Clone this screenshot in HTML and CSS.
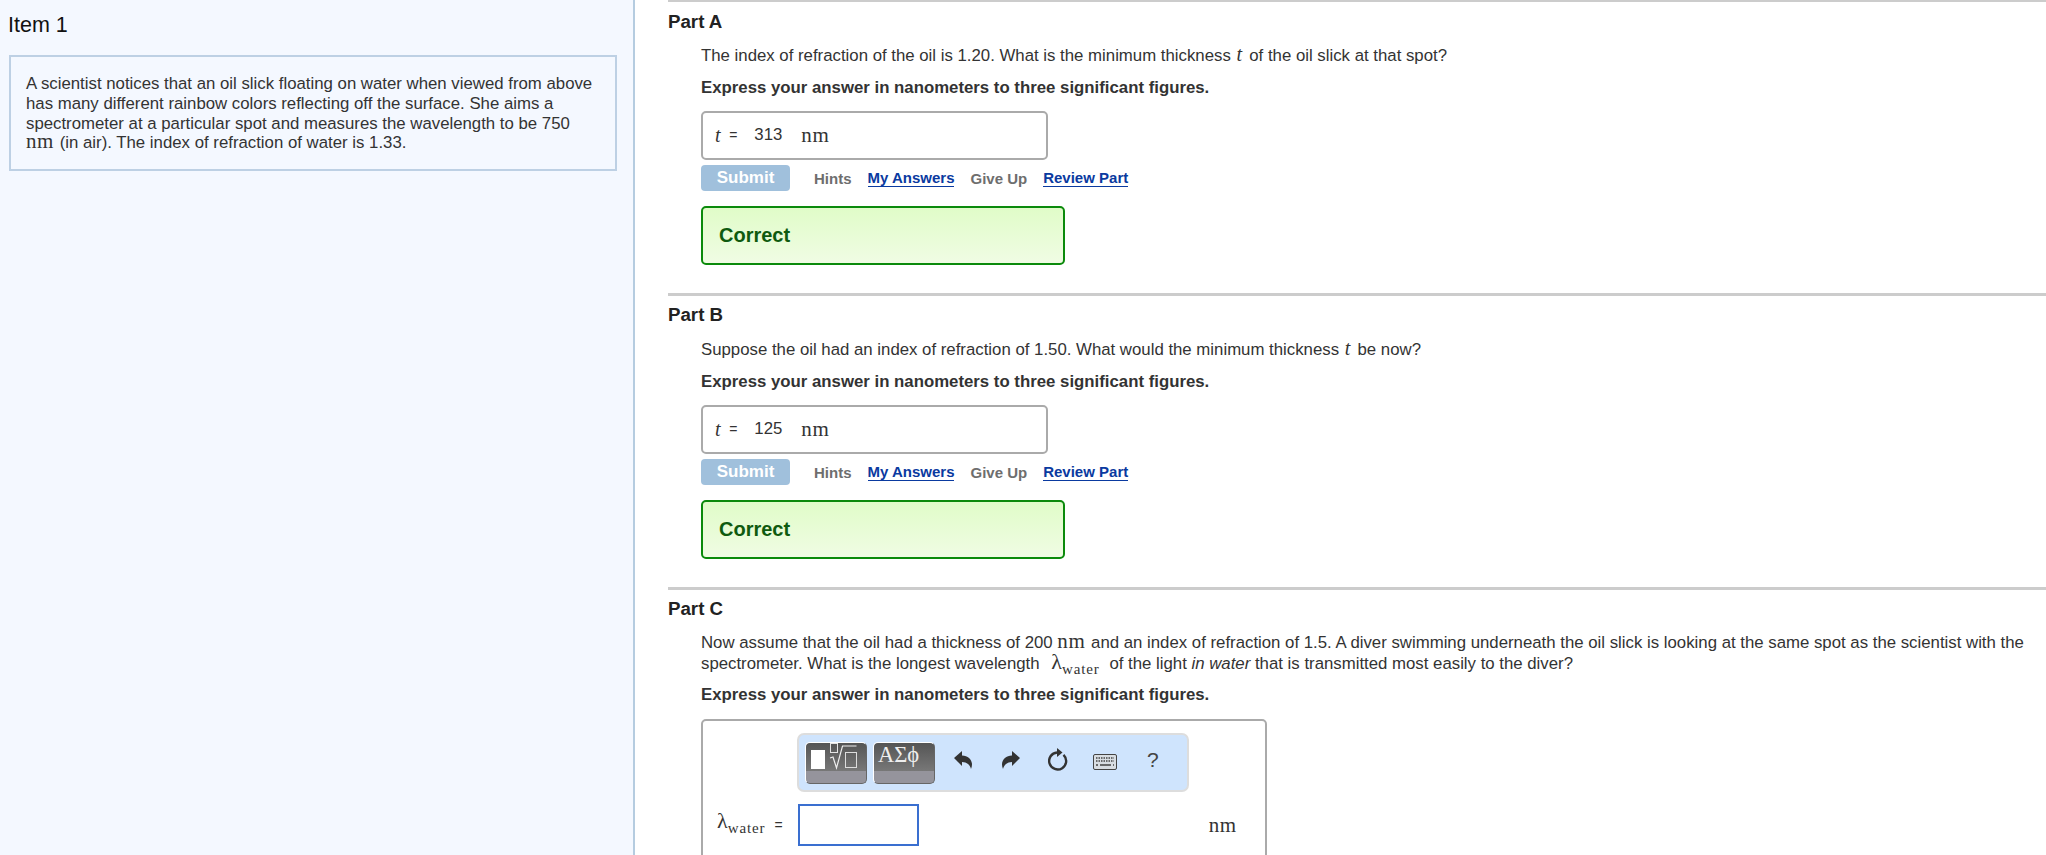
FILE: index.html
```html
<!DOCTYPE html>
<html lang="en">
  <head>
    <meta charset="UTF-8" />
    <meta name="viewport" content="width=device-width, initial-scale=1.0" />
    <title>Item 1</title>
    <link rel="stylesheet" href="styles.css">
  </head>
  <body>
    <div class="item-panel">
      <h1>Item 1</h1>
      <div class="intro">
        A scientist notices that an oil slick floating on water when viewed from above<br />
        has many different rainbow colors reflecting off the surface. She aims a<br />
        spectrometer at a particular spot and measures the wavelength to be 750<br />
        <span class="math nm">nm</span> (in air). The index of refraction of water is 1.33.
      </div>
    </div>

    <div class="parts">
      <section class="part">
        <h2>Part A</h2>
        <div class="part-body">
          <p class="question">The index of refraction of the oil is 1.20. What is the minimum thickness <span class="math var"><i>t</i></span> of the oil slick at that spot?</p>
          <p class="express">Express your answer in nanometers to three significant figures.</p>
          <div class="answer"><span class="math"><i>t</i></span><span class="eq">=</span><span class="value">313</span><span class="math unit">nm</span></div>
          <div class="actions">
            <button class="submit">Submit</button>
            <a class="plain first">Hints</a>
            <a class="link">My Answers</a>
            <a class="plain">Give Up</a>
            <a class="link">Review Part</a>
          </div>
          <div class="correct">Correct</div>
        </div>
      </section>

      <section class="part">
        <h2>Part B</h2>
        <div class="part-body">
          <p class="question">Suppose the oil had an index of refraction of 1.50. What would the minimum thickness <span class="math var"><i>t</i></span> be now?</p>
          <p class="express">Express your answer in nanometers to three significant figures.</p>
          <div class="answer"><span class="math"><i>t</i></span><span class="eq">=</span><span class="value">125</span><span class="math unit">nm</span></div>
          <div class="actions">
            <button class="submit">Submit</button>
            <a class="plain first">Hints</a>
            <a class="link">My Answers</a>
            <a class="plain">Give Up</a>
            <a class="link">Review Part</a>
          </div>
          <div class="correct">Correct</div>
        </div>
      </section>

      <section class="part">
        <h2>Part C</h2>
        <div class="part-body">
          <p class="question long">Now assume that the oil had a thickness of 200 <span class="math nm">nm</span> and an index of refraction of 1.5. A diver swimming underneath the oil slick is looking at the same spot as the scientist with the spectrometer. What is the longest wavelength <span class="math lambda">λ<sub>water</sub></span> of the light <i>in water</i> that is transmitted most easily to the diver?</p>
          <p class="express">Express your answer in nanometers to three significant figures.</p>
          <div class="editor">
            <div class="toolbar">
              <div class="tpl">
                <svg width="61" height="40" viewBox="0 0 61 40">
                  <rect x="5" y="7" width="14" height="19" fill="#fff" />
                  <rect x="24.500" y="0.500" width="7" height="9" fill="none" stroke="#e4e4e4" />
                  <path d="M24 15l3 -1l3.500 11l6 -22h14" fill="none" stroke="#eee" stroke-width="1.200" />
                  <rect x="39.500" y="9.500" width="11" height="15" fill="none" stroke="#ddd" />
                </svg>
              </div>
              <div class="tpl greek">ΑΣϕ</div>
              <svg class="tool undo" width="18" height="18" viewBox="0 0 18 18">
                <path d="M0 7L8 0v4.500c6 0 10 4 10 9c0 1.500-.4 3-1 4.500c-1-4-4-7-9-7v4z" fill="#333" />
              </svg>
              <svg class="tool redo" width="18" height="18" viewBox="0 0 18 18">
                <path d="M18 7L10 0v4.500c-6 0-10 4-10 9c0 1.500.4 3 1 4.500c1-4 4-7 9-7v4z" fill="#333" />
              </svg>
              <svg class="tool reload" width="20" height="23" viewBox="0 0 20 23">
                <path d="M15.500 6.800a8.500 8.500 0 1 1 -6.500 -2.300" fill="none" stroke="#333" stroke-width="2.400" />
                <path d="M9 0v9l5.500 -4.500z" fill="#333" />
              </svg>
              <svg class="tool keys" width="24" height="16" viewBox="0 0 24 16">
                <rect x="0.500" y="0.500" width="23" height="15" rx="1.500" fill="#d8dde2" stroke="#444" />
                <path d="M3 4h18M3 7h18" stroke="#444" stroke-width="1.500" stroke-dasharray="1.500 1" />
                <path d="M3 11h2M7 11h11M20 11h1" stroke="#444" stroke-width="1.600" />
              </svg>
              <span class="tool help">?</span>
            </div>
            <div class="entry-row">
              <span class="math lambda entry-label">λ<sub>water</sub></span>
              <span class="eq">=</span>
              <input type="text" class="entry" />
              <span class="math entry-unit">nm</span>
            </div>
          </div>
        </div>
      </section>
    </div>
  </body>
</html>
```

FILE: styles.css
```css
html,
body {
  height: 100%;
}
body {
  font-family: "Liberation Sans", Arial, sans-serif;
  font-size: 16.800px;
  color: #333;
  background-color: #fff;
  display: flex;
  margin: 0;
  overflow: hidden;
}
.item-panel {
  flex: 0 0 635px;
  box-sizing: border-box;
  height: 855px;
  background-color: #f4f8ff;
  border-right: 2px solid #b5cce0;
  padding: 11px 16px 0 9px;
}
h1 {
  font-size: 21.500px;
  font-weight: normal;
  line-height: 28px;
  margin: 0 0 16px -1px;
  color: #111;
}
.intro {
  border: 2px solid #bdd0e4;
  padding: 17px 17px 16px 15px;
  line-height: 19.800px;
  white-space: nowrap;
}
.math {
  font-family: "Liberation Serif", serif;
  font-size: 20px;
  letter-spacing: 0.6px;
  line-height: 0;
}
.nm {
  font-size: 21px;
  margin-right: 1px;
}
.var {
  margin: 0 2px 0 1px;
}
.parts {
  flex: 1;
  height: 855px;
  overflow: hidden;
  padding-left: 33px;
}
.part {
  box-sizing: border-box;
  border-top: 3px solid #ccc;
  height: 294px;
  padding-top: 9px;
}
.part:first-child {
  margin-top: -1px;
  padding-top: 10px;
}
.part:first-child h2 {
  margin-bottom: 14px;
}
h2 {
  font-size: 18.700px;
  line-height: 20px;
  margin: 0 0 15px;
  color: #222;
}
.part-body {
  margin-left: 33px;
}
.question {
  margin: 0 0 12px;
  line-height: 20px;
}
.question.long {
  line-height: 21px;
  margin: -2px 0 11px;
}
.express {
  margin: 0 0 13px;
  font-weight: bold;
  line-height: 20px;
}
.answer {
  box-sizing: border-box;
  width: 347px;
  height: 49px;
  border: 2px solid #aaa;
  border-radius: 5px;
  display: flex;
  align-items: center;
  padding: 0 0 2px 12px;
}
.eq {
  font-size: 14px;
  margin-left: 8px;
}
.value {
  margin-left: 17px;
}
.unit {
  margin-left: 19px;
  font-size: 21px;
}
.actions {
  display: flex;
  align-items: center;
  margin-top: 5px;
  font-size: 15px;
  font-weight: bold;
}
.submit {
  width: 89px;
  height: 26px;
  padding: 0;
  border: none;
  border-radius: 4px;
  background-color: #a0c0dc;
  color: #fff;
  font-family: inherit;
  font-size: 17px;
  font-weight: bold;
}
.plain {
  color: #6e6e6e;
  margin-left: 16px;
}
.plain.first {
  margin-left: 24px;
}
.link {
  color: #0a3aa0;
  border-bottom: 1px solid #0a3aa0;
  line-height: 16px;
  margin-left: 16px;
}
.correct {
  box-sizing: border-box;
  width: 364px;
  height: 59px;
  margin-top: 15px;
  padding-left: 16px;
  display: flex;
  align-items: center;
  border: 2px solid #0b8a0b;
  border-radius: 5px;
  background: linear-gradient(#e0fcc8, #f0fce4);
  color: #0f5a0f;
  font-size: 20px;
  font-weight: bold;
}
.editor {
  box-sizing: border-box;
  width: 566px;
  height: 200px;
  margin-top: 14px;
  border: 2px solid #aaa;
  border-radius: 5px;
  padding: 12px 14px;
}
.toolbar {
  box-sizing: border-box;
  width: 392px;
  height: 59px;
  margin-left: 80px;
  display: flex;
  align-items: center;
  padding-left: 6px;
  background-color: #cfe4fd;
  border: 2px solid #ddd;
  border-radius: 7px;
}
.tpl {
  box-sizing: border-box;
  flex: none;
  width: 62px;
  height: 42px;
  margin-right: 6px;
  border-radius: 5px;
  border: 1px solid #fff;
  border-right-color: #666;
  border-bottom-color: #666;
  background: linear-gradient(#555, #777 69%, #95949c 69%);
  overflow: hidden;
}
.greek {
  margin-right: 0;
  padding-left: 4px;
  font-family: "Liberation Serif", serif;
  font-size: 22.500px;
  line-height: 24px;
  color: #eee;
}
.tool {
  flex: none;
  margin-bottom: 6px;
}
.undo {
  margin-left: 19px;
}
.redo {
  margin-left: 30px;
}
.reload {
  margin-left: 28px;
}
.keys {
  margin-left: 25px;
  margin-bottom: 1px;
}
.help {
  font-size: 21px;
  color: #444;
  margin-left: 30px;
}
.entry-row {
  display: flex;
  align-items: center;
  margin-top: 12px;
}
.lambda {
  font-size: 22px;
  letter-spacing: 0;
  margin: 0 5px 0 7px;
}
sub {
  font-size: 15px;
  letter-spacing: 0.9px;
  line-height: 0;
}
.entry-label {
  flex: 0 0 46px;
  margin: 0 0 8px;
  line-height: 20px;
  white-space: nowrap;
}
.entry-row .eq {
  margin-left: 9px;
}
.entry {
  box-sizing: border-box;
  flex: none;
  width: 121px;
  height: 42px;
  margin-left: 15px;
  border: 2px solid #3a6fd0;
  background-color: #fff;
}
.entry-unit {
  margin-left: 290px;
  font-size: 21px;
}
```
